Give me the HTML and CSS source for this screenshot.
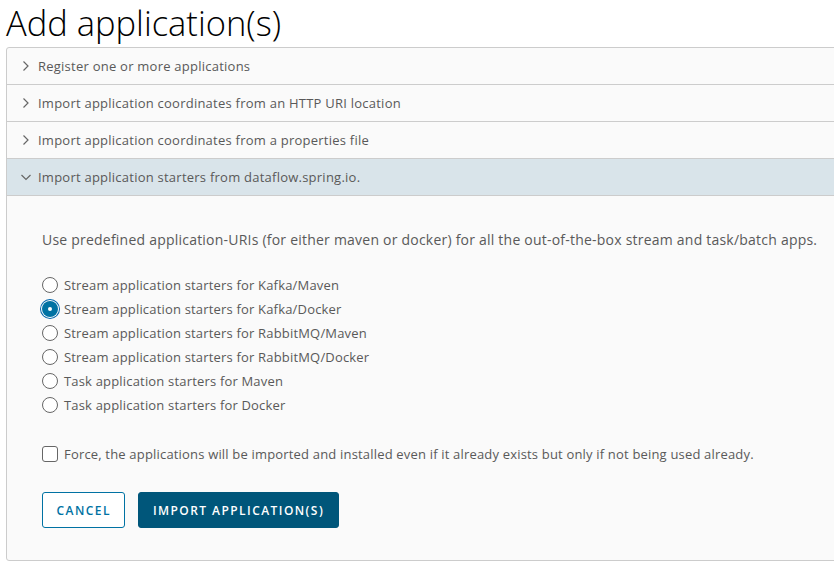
FILE: index.html
```html
<!DOCTYPE html>
<html>
<head>
<meta charset="utf-8">
<link rel="stylesheet" href="styles.css">
</head>
<body>
<h1 class="title">Add application(s)</h1>
<div class="panel">
  <div class="acc-row">
    <svg class="chev" width="10" height="12" viewBox="0 0 10 12"><path d="M2.5 1.5 L7 6 L2.5 10.5" fill="none" stroke="#666" stroke-width="1.2"/></svg>
    <span>Register one or more applications</span>
  </div>
  <div class="acc-row">
    <svg class="chev" width="10" height="12" viewBox="0 0 10 12"><path d="M2.5 1.5 L7 6 L2.5 10.5" fill="none" stroke="#666" stroke-width="1.2"/></svg>
    <span>Import application coordinates from an HTTP URI location</span>
  </div>
  <div class="acc-row">
    <svg class="chev" width="10" height="12" viewBox="0 0 10 12"><path d="M2.5 1.5 L7 6 L2.5 10.5" fill="none" stroke="#666" stroke-width="1.2"/></svg>
    <span>Import application coordinates from a properties file</span>
  </div>
  <div class="acc-row active">
    <svg class="chev" width="12" height="12" viewBox="0 0 12 12"><path d="M1.5 4 L6 8.5 L10.5 4" fill="none" stroke="#666" stroke-width="1.2"/></svg>
    <span>Import application starters from dataflow.spring.io.</span>
  </div>
  <div class="acc-body">
    <p class="intro">Use predefined application-URIs (for either maven or docker) for all the out-of-the-box stream and task/batch apps.</p>
    <div class="radios">
      <label class="opt"><span class="radio"></span>Stream application starters for Kafka/Maven</label>
      <label class="opt"><span class="radio checked"></span>Stream application starters for Kafka/Docker</label>
      <label class="opt"><span class="radio"></span>Stream application starters for RabbitMQ/Maven</label>
      <label class="opt"><span class="radio"></span>Stream application starters for RabbitMQ/Docker</label>
      <label class="opt"><span class="radio"></span>Task application starters for Maven</label>
      <label class="opt"><span class="radio"></span>Task application starters for Docker</label>
    </div>
    <label class="opt force"><span class="check"></span>Force, the applications will be imported and installed even if it already exists but only if not being used already.</label>
    <div class="actions">
      <button class="btn btn-outline">Cancel</button>
      <button class="btn btn-primary">Import application(s)</button>
    </div>
  </div>
</div>
</body>
</html>
```

FILE: styles.css
```css
html, body {
  margin: 0;
  padding: 0;
  background: #ffffff;
}
body {
  font-family: "Open Sans", "Liberation Sans", sans-serif;
  color: #595959;
  width: 834px;
  height: 572px;
  overflow: hidden;
}
.title {
  margin: 0;
  padding: 0 0 0 6px;
  height: 47px;
  font-size: 34.5px;
  line-height: 46px;
  font-weight: 300;
  color: #000;
}
.panel {
  margin-left: 6px;
  margin-right: -20px;
  border: 1px solid #cccccc;
  border-radius: 3px;
  background: #fafafa;
}
.acc-row {
  height: 36px;
  border-bottom: 1px solid #cccccc;
  display: flex;
  align-items: center;
  font-size: 13px;
  letter-spacing: 0.24px;
  color: #595959;
}
.acc-row .chev {
  margin-left: 14px;
  margin-right: 7px;
  flex: none;
}
.acc-row.active .chev {
  margin-left: 13px;
  margin-right: 6px;
}
.acc-row.active {
  background: #d9e4ea;
}
.acc-body {
  padding: 32px 0 32px 35px;
}
.intro {
  margin: 0 0 21px;
  font-size: 14px;
  line-height: 24px;
  letter-spacing: 0.22px;
}
.radios {
  display: flex;
  flex-direction: column;
  margin-bottom: 25px;
}
.opt {
  display: flex;
  align-items: center;
  font-size: 13px;
  line-height: 24px;
  height: 24px;
  letter-spacing: 0.18px;
}
.radio {
  width: 14px;
  height: 14px;
  border: 1px solid #666;
  border-radius: 50%;
  background: #fff;
  margin-right: 6px;
  box-sizing: content-box;
}
.radio.checked {
  width: 16px;
  height: 16px;
  border: none;
  background: #0072a3;
  box-shadow: 0 0 0 1px #fff, 0 0 0 2px #0065ab;
  position: relative;
}
.radio.checked::after {
  content: "";
  position: absolute;
  left: 6px;
  top: 6px;
  width: 4px;
  height: 4px;
  border-radius: 50%;
  background: #fff;
}
.check {
  width: 14px;
  height: 14px;
  border: 1px solid #666;
  border-radius: 3px;
  background: #fff;
  margin-right: 6px;
}
.force {
  margin-bottom: 26px;
}
.actions {
  display: flex;
  gap: 13px;
}
.btn {
  height: 36px;
  border-radius: 3px;
  font-family: "Open Sans", "Liberation Sans", sans-serif;
  font-size: 12px;
  font-weight: 600;
  letter-spacing: 0.12em;
  text-transform: uppercase;
  padding: 0 13.5px;
}
.btn-outline {
  background: #fff;
  border: 1px solid #0072a3;
  color: #0072a3;
}
.btn-primary {
  background: #00567a;
  border: 1px solid #00567a;
  color: #fff;
}
```
